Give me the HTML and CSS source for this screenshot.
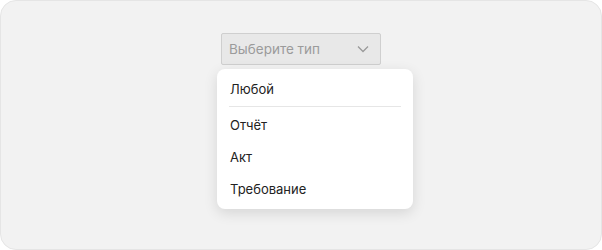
FILE: index.html
```html
<!DOCTYPE html>
<html lang="ru">
<head>
    <meta charset="UTF-8">
    <title>Выбор типа</title>
    <link rel="stylesheet" href="styles.css">
</head>
<body>
    <div class="frame">
        <div class="picker">
            <div class="select">
                <span class="placeholder">Выберите тип</span>
                <svg class="chevron" width="12" height="8" viewBox="0 0 12 8">
                    <path d="M1 1.5 L6 6.5 L11 1.5" fill="none" stroke="#9a9a9a" stroke-width="1.3"/>
                </svg>
            </div>
            <ul class="menu">
                <li class="item">Любой</li>
                <li class="divider"></li>
                <li class="item">Отчёт</li>
                <li class="item">Акт</li>
                <li class="item">Требование</li>
            </ul>
        </div>
    </div>
</body>
</html>
```

FILE: styles.css
```css
html, body {
    margin: 0;
    padding: 0;
    background-color: #ffffff;
}

body {
    font-family: Inter, "Noto Sans", sans-serif;
    font-size: 13px;
    color: #222222;
}

.frame {
    box-sizing: border-box;
    width: 602px;
    height: 250px;
    background-color: #f2f2f2;
    border: 1px solid #e5e5e5;
    border-radius: 16px;
    display: flex;
    justify-content: center;
    padding-top: 32px;
}

.picker {
    width: 160px;
}

.select {
    box-sizing: border-box;
    height: 32px;
    background-color: #e8e8e8;
    border: 1px solid #cfcfcf;
    border-radius: 2px;
    display: flex;
    align-items: center;
    justify-content: space-between;
    padding: 0 11px 0 7px;
}

.placeholder {
    color: #9b9b9b;
    font-size: 13.5px;
}

.chevron {
    display: block;
}

.menu {
    list-style: none;
    margin: 4px 0 0 -4px;
    padding: 4px 0;
    width: 196px;
    background-color: #ffffff;
    border-radius: 8px;
    box-shadow: 0 4px 14px rgba(0, 0, 0, 0.12);
}

.item {
    height: 32px;
    line-height: 32px;
    padding: 0 13px;
}

.divider {
    height: 1px;
    margin: 1px 12px 2px;
    background-color: #e6e6e6;
}
```
